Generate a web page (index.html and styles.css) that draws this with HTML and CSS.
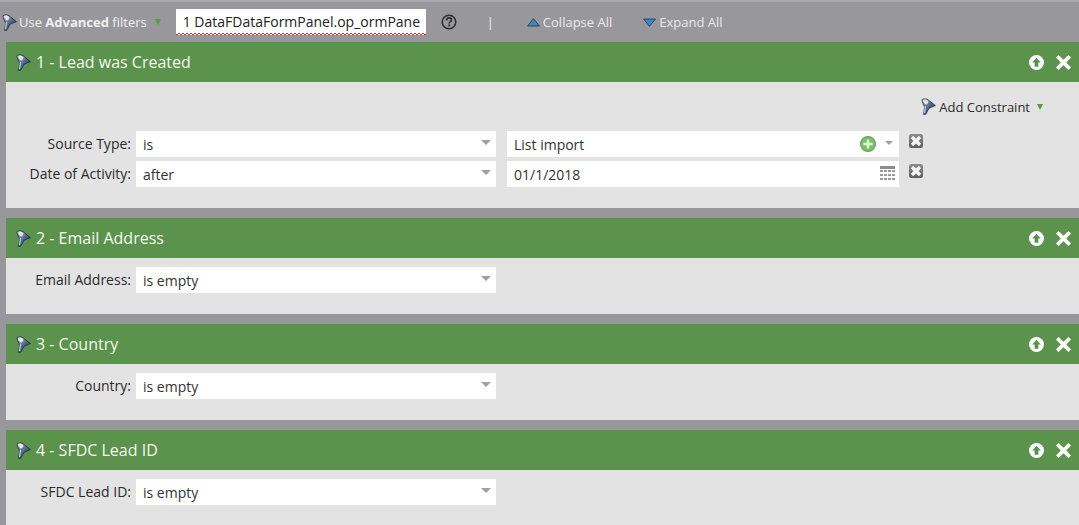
FILE: index.html
```html
<!DOCTYPE html>
<html lang="en">
<head>
<meta charset="utf-8">
<title>Advanced filters</title>
<link rel="stylesheet" href="styles.css">
</head>
<body>
<svg class="defs" width="0" height="0" aria-hidden="true">
  <defs>
    <linearGradient id="fg" x1="0" y1="0" x2="1" y2="1">
      <stop offset="0" stop-color="#c3ccd8"/>
      <stop offset="0.5" stop-color="#52678a"/>
      <stop offset="1" stop-color="#15233c"/>
    </linearGradient>
    <symbol id="funnel" viewBox="0 0 15 17">
      <path d="M1 1.8 C3.4 .2 6.6 .8 8.6 3 L14.4 7.6 8 10.2 4.8 16.2 2.6 16.4 3.6 9.6 C2.8 6.8 1.2 4.4 1 1.8Z" fill="url(#fg)" stroke="#1f2d47" stroke-width=".8" stroke-linejoin="round"/>
      <path d="M1.8 2 C3.6 1 5.8 1.4 7.2 3 C7.6 4.4 6.6 6 5.2 6.6 C3.6 5.6 2.2 3.8 1.8 2Z" fill="#e4e6ea"/>
      <path d="M4.4 8.2 L3.6 15.2" fill="none" stroke="#e8ecf2" stroke-width="1"/>
    </symbol>
    <symbol id="up" viewBox="0 0 16 16">
      <circle cx="8" cy="8" r="8" fill="#fff"/>
      <path d="M8 3 L12.6 8 H10 V12.4 H6 V8 H3.4Z" fill="#5b924c"/>
    </symbol>
    <symbol id="close" viewBox="1 1 14 14">
      <path d="M3.4 1 L8 5.4 12.6 1 15 3.4 10.6 8 15 12.6 12.6 15 8 10.6 3.4 15 1 12.6 5.4 8 1 3.4Z" fill="#fff"/>
    </symbol>
    <linearGradient id="rg" x1="0" y1="0" x2="0" y2="1">
      <stop offset="0" stop-color="#8a8a8a"/>
      <stop offset="1" stop-color="#5f5f5f"/>
    </linearGradient>
    <symbol id="remove" viewBox="0 0 14 14">
      <rect width="14" height="14" rx="2.5" fill="url(#rg)"/>
      <path d="M4.2 1.8 L7 4.4 9.8 1.8 12.2 4.2 9.6 7 12.2 9.8 9.8 12.2 7 9.6 4.2 12.2 1.8 9.8 4.4 7 1.8 4.2Z" fill="#f4f4f4"/>
    </symbol>
  </defs>
</svg>

<header class="toolbar">
  <svg class="icon-funnel tb-funnel"><use href="#funnel"/></svg>
  <span class="tb-use">Use <b>Advanced</b> filters</span>
  <span class="tri-green tb-tri"></span>
  <div class="tb-input">1 DataFDataFormPanel.op_ormPane</div>
  <svg class="tb-help" viewBox="0 0 16 16">
    <circle cx="8" cy="8" r="6.8" fill="none" stroke="#2d2d30" stroke-width="1.5"/>
    <path d="M5.6 6.4 C5.7 4.6 6.9 3.9 8.1 3.9 C9.5 3.9 10.5 4.8 10.5 6 C10.5 7.7 8.2 7.7 8.2 9.5" fill="none" stroke="#2d2d30" stroke-width="1.6"/>
    <rect x="7.3" y="10.5" width="1.8" height="1.8" fill="#2d2d30"/>
  </svg>
  <span class="tb-sep">|</span>
  <svg class="tb-arrow tb-collapse" viewBox="0 0 13 9"><path d="M6.5 .7 L12.4 8 H.6Z" fill="#3f86bd" stroke="#17365a" stroke-width=".8"/></svg>
  <span class="tb-link">Collapse All</span>
  <svg class="tb-arrow tb-expand" viewBox="0 0 13 9"><path d="M.6 1 H12.4 L6.5 8.3Z" fill="#3f86bd" stroke="#17365a" stroke-width=".8"/></svg>
  <span class="tb-link">Expand All</span>
</header>

<main class="panels">
  <section class="panel">
    <div class="panel-head">
      <svg class="icon-funnel"><use href="#funnel"/></svg>
      <h2 class="panel-title">1 - Lead was Created</h2>
      <svg class="head-icon"><use href="#up"/></svg>
      <svg class="head-icon"><use href="#close"/></svg>
    </div>
    <div class="panel-body panel-body-first">
      <div class="constraint-bar">
        <svg class="icon-funnel"><use href="#funnel"/></svg>
        <span class="constraint-text">Add Constraint</span>
        <span class="tri-green"></span>
      </div>
      <div class="rows">
        <div class="row">
          <label class="row-label">Source Type:</label>
          <div class="field field-op"><span class="field-text">is</span><span class="caret"></span></div>
          <div class="field field-val"><span class="field-text">List import</span>
            <svg class="plus" viewBox="0 0 16 16">
              <circle cx="8" cy="8" r="7.4" fill="#6cc95a" stroke="#81927e" stroke-width="1.2"/>
              <path d="M3.4 8 H12.6 M8 3.4 V12.6" stroke="#e6fbdf" stroke-width="2.4"/>
            </svg>
            <span class="caret caret-small"></span></div>
          <svg class="remove"><use href="#remove"/></svg>
        </div>
        <div class="row">
          <label class="row-label">Date of Activity:</label>
          <div class="field field-op"><span class="field-text">after</span><span class="caret"></span></div>
          <div class="field field-val"><span class="field-text">01/1/2018</span>
            <svg class="cal" viewBox="0 0 15 14">
              <path d="M0 0H15V3H0Z" fill="#8d8d8d"/>
              <path d="M0 4h3v2H0zM4 4h3v2H4zM8 4h3v2H8zM12 4h3v2h-3zM0 8h3v2H0zM4 8h3v2H4zM8 8h3v2H8zM12 8h3v2h-3zM0 12h3v2H0zM4 12h3v2H4zM8 12h3v2H8zM12 12h3v2h-3z" fill="#9a9a9a"/>
            </svg>
          </div>
          <svg class="remove"><use href="#remove"/></svg>
        </div>
      </div>
    </div>
  </section>

  <section class="panel">
    <div class="panel-head">
      <svg class="icon-funnel"><use href="#funnel"/></svg>
      <h2 class="panel-title">2 - Email Address</h2>
      <svg class="head-icon"><use href="#up"/></svg>
      <svg class="head-icon"><use href="#close"/></svg>
    </div>
    <div class="panel-body">
      <div class="row">
        <label class="row-label">Email Address:</label>
        <div class="field field-op"><span class="field-text">is empty</span><span class="caret"></span></div>
      </div>
    </div>
  </section>

  <section class="panel">
    <div class="panel-head">
      <svg class="icon-funnel"><use href="#funnel"/></svg>
      <h2 class="panel-title">3 - Country</h2>
      <svg class="head-icon"><use href="#up"/></svg>
      <svg class="head-icon"><use href="#close"/></svg>
    </div>
    <div class="panel-body">
      <div class="row">
        <label class="row-label">Country:</label>
        <div class="field field-op"><span class="field-text">is empty</span><span class="caret"></span></div>
      </div>
    </div>
  </section>

  <section class="panel">
    <div class="panel-head">
      <svg class="icon-funnel"><use href="#funnel"/></svg>
      <h2 class="panel-title">4 - SFDC Lead ID</h2>
      <svg class="head-icon"><use href="#up"/></svg>
      <svg class="head-icon"><use href="#close"/></svg>
    </div>
    <div class="panel-body">
      <div class="row">
        <label class="row-label">SFDC Lead ID:</label>
        <div class="field field-op"><span class="field-text">is empty</span><span class="caret"></span></div>
      </div>
    </div>
  </section>
</main>
</body>
</html>
```

FILE: styles.css
```css
* { box-sizing: border-box; }
html, body { margin: 0; padding: 0; height: 100%; overflow: hidden; }
body {
  background: #98979c;
  font-family: "Open Sans", "Liberation Sans", sans-serif;
  font-size: 14px;
  color: #2b2b2b;
  border-top: 2px solid #a9a8ad;
}
.defs { position: absolute; }

.toolbar {
  display: flex;
  align-items: center;
  height: 40px;
  padding-left: 2px;
  color: #f0f0f0;
  font-size: 13px;
}
.icon-funnel { width: 15px; height: 17px; flex: none; }
.tb-use { margin-left: 2px; white-space: nowrap; }
.tb-tri { margin-left: 8px; }
.tb-input {
  width: 250px;
  height: 26px;
  margin-left: 15px;
  padding-left: 7px;
  overflow: hidden;
  line-height: 26px;
  color: #222;
  font-size: 14px;
  white-space: nowrap;
  flex: none;
  background-color: #fff;
  background-image:
    linear-gradient(135deg, transparent 38%, #d42a2a 38%, #d42a2a 62%, transparent 62%),
    linear-gradient(45deg, transparent 38%, #d42a2a 38%, #d42a2a 62%, transparent 62%);
  background-size: 4px 2px, 4px 2px;
  background-position: 0 100%, 2px 100%;
  background-repeat: repeat-x;
}
.tb-help { width: 16px; height: 16px; margin-left: 15px; flex: none; }
.tb-sep { margin-left: 30px; }
.tb-arrow { width: 13px; height: 9px; flex: none; }
.tb-collapse { margin-left: 33px; }
.tb-expand { margin-left: 31px; }
.tb-link { margin-left: 3px; white-space: nowrap; color: #e9e9ea; }

.tri-green {
  display: inline-block;
  width: 0;
  height: 0;
  border-left: 3.5px solid transparent;
  border-right: 3.5px solid transparent;
  border-top: 6px solid #4ea03a;
  flex: none;
}

.panels {
  display: flex;
  flex-direction: column;
  gap: 10px;
  padding-left: 6px;
}
.panel-head {
  display: flex;
  align-items: center;
  height: 40px;
  background: #5b924c;
  padding: 0 8px 0 10px;
  color: #fff;
}
.panel-title {
  margin: 0 auto 0 5px;
  font-size: 16px;
  font-weight: 400;
  line-height: 40px;
  color: #f5f8f1;
}
.head-icon { width: 15px; height: 15px; margin-left: 12px; flex: none; }

.panel-body {
  background: #e3e3e3;
  height: 56px;
  padding-top: 9px;
}
.panel-body-first {
  height: 126px;
  padding-top: 0;
}
.constraint-bar {
  display: flex;
  align-items: center;
  height: 49px;
  justify-content: flex-end;
  padding-right: 36px;
  font-size: 13px;
  color: #2b2b2b;
}
.constraint-text { margin: 0 7px 0 3px; }

.rows { display: flex; flex-direction: column; gap: 4px; }
.row { display: flex; align-items: flex-start; height: 26px; }
.row-label {
  width: 125px;
  flex: none;
  text-align: right;
  line-height: 25px;
  white-space: nowrap;
}
.field {
  display: flex;
  align-items: center;
  height: 26px;
  background: #fff;
  padding: 0 6px 0 7px;
  flex: none;
}
.field-op { width: 360px; margin-left: 5px; }
.field-val { width: 392px; margin-left: 11px; }
.field-text { margin-right: auto; line-height: 27px; color: #333; }
.caret {
  width: 0;
  height: 0;
  margin-right: -1px;
  margin-bottom: 3px;
  border-left: 5.5px solid transparent;
  border-right: 5.5px solid transparent;
  border-top: 5.5px solid #a0a0a0;
}
.caret-small {
  margin-right: 0;
  border-left-width: 4.5px;
  border-right-width: 4.5px;
  border-top-width: 4.5px;
}
.plus { width: 16px; height: 16px; margin-right: 9px; flex: none; }
.cal { width: 15px; height: 14px; margin-right: -2px; margin-bottom: 2px; flex: none; }
.remove { width: 14px; height: 14px; margin: 3px 0 0 10px; flex: none; }
```
